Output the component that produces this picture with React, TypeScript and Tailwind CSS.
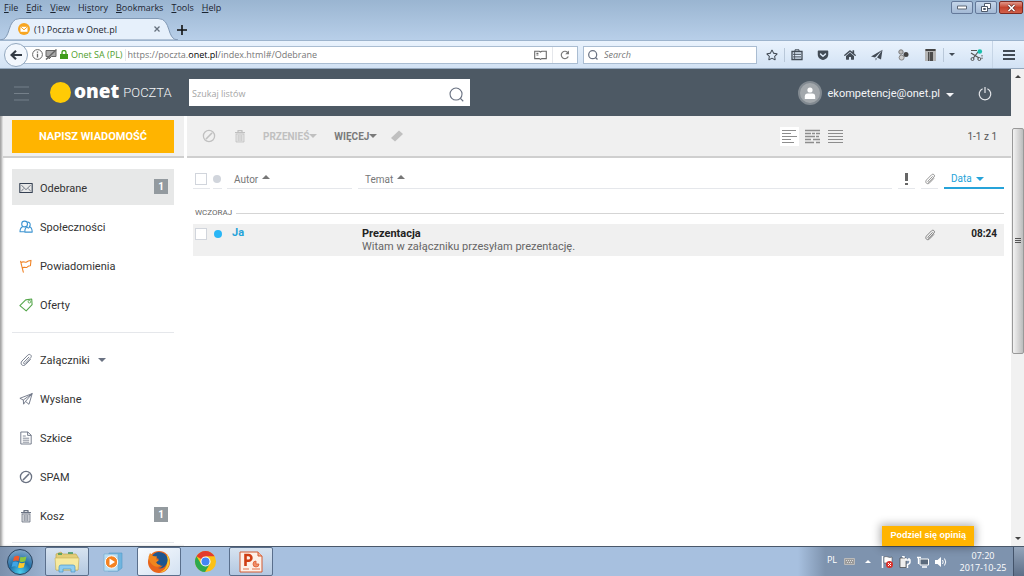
import type { ReactNode } from 'react'
import { FaRegStar, FaGetPocket, FaHome } from 'react-icons/fa'

/* ---------- Icons ---------- */

function Caret({ className = '', up = false }: { className?: string; up?: boolean }) {
    return (
        <svg viewBox="0 0 8 4" className={`w-2 h-1 shrink-0 ${className}`} fill="currentColor" aria-hidden="true">
            <path d={up ? 'M4 0L8 4H0z' : 'M0 0H8L4 4z'} />
        </svg>
    )
}

function LineIcon({ className = '', children }: { className?: string; children: ReactNode }) {
    return (
        <svg
            viewBox="0 0 14 14"
            className={`w-3.5 h-3.5 shrink-0 ${className}`}
            fill="none"
            stroke="currentColor"
            strokeWidth="1.1"
            strokeLinejoin="round"
            aria-hidden="true"
        >
            {children}
        </svg>
    )
}

const BanIcon = ({ className = '' }) => (
    <LineIcon className={className}>
        <circle cx="7" cy="7" r="5.6" strokeWidth="1.3" />
        <path d="M4.3 9.7L9.7 4.3" strokeWidth="1.6" strokeLinecap="round" />
    </LineIcon>
)

const TrashIcon = ({ className = '' }) => (
    <LineIcon className={className}>
        <path d="M2 3.6h10M5 3.4V1.6h4v1.8" strokeWidth="1.3" />
        <path d="M3 5h8v8H3z" fill="currentColor" fillOpacity="0.25" strokeWidth="0.8" />
        <path d="M5.3 6v6M7 6v6M8.7 6v6" strokeWidth="0.7" />
    </LineIcon>
)

const ClipIcon = ({ className = '' }) => (
    <LineIcon className={className}>
        <path
            d="M9.8 4.2L4.8 9.4c-.8.9.5 2.1 1.3 1.2l5.6-5.900c1.8-2-1-4.500-2.900-2.600L3 8C.4 10.900 3.900 14.200 6.600 11.500l4.800-5"
            strokeWidth="0.9"
            strokeLinecap="round"
        />
    </LineIcon>
)

const MailIcon = () => (
    <LineIcon className="text-gray-700">
        <path d="M.8 2.5h12.4v9H.8z" />
        <path d="M2.5 4.2L7 8.7l4.5-4.5M2.3 10l2.4-2.2M11.7 10L9.3 7.8" strokeWidth="0.7" />
    </LineIcon>
)

const PeopleIcon = () => (
    <LineIcon className="text-[#3d94d1]">
        <circle cx="5.6" cy="4" r="2.9" />
        <path d="M4 6.6C1.8 7.4 1 9 1 11.8h4.6" />
        <path d="M8.3 2.2c2.5-.6 4 2.6 2.1 4.3 2 .8 2.8 2.6 2.8 5.6H5.8c0-3 .8-4.7 2.6-5.5M7.3 6.3l2 1.8 1.7-1.2" />
    </LineIcon>
)

const FlagIcon = () => (
    <LineIcon className="text-[#f08427]">
        <path d="M4.3 13.2L1.6 2.4M2 3.6c2.6-2 4 .6 5.6-.6 1.5-1.3 2.8-1.4 4.4-1.6l-.6 5.400c-1.800 0-2 .2-3.400 1.400-1.600 1-3-.8-4.800.8" strokeLinecap="round" />
    </LineIcon>
)

const TagIcon = () => (
    <LineIcon className="text-[#55a64b]">
        <path d="M.9 7.6L6.7 1.9l6-.9.4 5.6-5.9 6.3z" />
        <circle cx="10.4" cy="3.7" r="1.3" strokeWidth="0.9" />
    </LineIcon>
)

const SendIcon = () => (
    <LineIcon className="text-gray-500">
        <path d="M.9 6.3L13.2 1.6 10 12.3 6.5 9.4 4.6 12.2 4.3 8zM4.3 8L13.2 1.6 6.5 9.4" strokeWidth="0.9" />
    </LineIcon>
)

const DraftIcon = () => (
    <LineIcon className="text-gray-500">
        <path d="M1.8 1h7l3.4 3.2V13H1.8zM8.6 1v3.4h3.6" strokeWidth="0.9" />
        <path d="M3.8 5h3M3.8 7.2h6.4M3.8 9.2h6.4M3.8 11.2h6.4" strokeWidth="0.8" />
    </LineIcon>
)

const Magnifier = ({ className = '' }) => (
    <svg viewBox="0 0 16 16" className={className} fill="none" stroke="currentColor" strokeWidth="1.2" aria-hidden="true">
        <circle cx="7.5" cy="7.5" r="6.4" />
        <path d="M12 12l3.2 3.2" />
    </svg>
)

/* ---------- Browser chrome ---------- */

const menus = ['File', 'Edit', 'View', 'History', 'Bookmarks', 'Tools', 'Help']
const accessKeys = [0, 0, 0, 2, 0, 0, 0]

function TitleBar() {
    return (
        <header className="bg-linear-to-b from-[#9ab5d1] to-[#b8cfe9] border-b border-[#9db4cd] text-[#1b2430]">
            <div className="flex h-4 items-start">
                <nav className="flex h-4 items-center gap-2 pl-1 text-[9px] leading-4">
                    {menus.map((menu, i) => (
                        <button key={menu} className="whitespace-nowrap">
                            {menu.slice(0, accessKeys[i])}
                            <u>{menu[accessKeys[i]]}</u>
                            {menu.slice(accessKeys[i] + 1)}
                        </button>
                    ))}
                </nav>
                <div className="ml-auto flex gap-0.5 pr-px pt-px">
                    <button aria-label="Minimize" className="flex h-[13px] w-[22px] items-center justify-center rounded-xs border border-[#64799a] bg-linear-to-b from-[#c5d6ea] to-[#a3b9d5]">
                        <svg viewBox="0 0 10 5" className="h-[5px] w-2.5"><path d="M.5 1h9v3h-9z" fill="#fff" stroke="#5c6675" /></svg>
                    </button>
                    <button aria-label="Restore" className="flex h-[13px] w-[22px] items-center justify-center rounded-xs border border-[#64799a] bg-linear-to-b from-[#c5d6ea] to-[#a3b9d5]">
                        <svg viewBox="0 0 10 9" className="h-[9px] w-2.5" fill="#fff" stroke="#4f5a6b"><path d="M3.5.5h6v5h-6z" /><path d="M.5 3.5h6v5h-6z" /><path d="M2.5 5.5h2v1h-2z" /></svg>
                    </button>
                    <button aria-label="Close" className="flex h-[13px] w-6 items-center justify-center rounded-xs border border-[#7d2b22] bg-linear-to-b from-[#e0978a] via-[#c4432d] to-[#d2604a]">
                        <svg viewBox="0 0 9 8" className="h-2 w-[9px]"><path d="M1.5 1l6 6M7.5 1l-6 6" stroke="#5f2a25" strokeWidth="3" /><path d="M1.5 1l6 6M7.5 1l-6 6" stroke="#fff" strokeWidth="1.7" /></svg>
                    </button>
                </div>
            </div>
            <div className="flex h-6 items-end">
                <div className="relative h-[22px] w-[178px]">
                    <svg viewBox="0 0 178 22" className="absolute inset-0 h-full w-full" preserveAspectRatio="none" aria-hidden="true">
                        <path d="M0 22C12 22 6 .5 20 .5H158C172 .5 166 22 178 22z" fill="#e6f0fb" stroke="#8199b5" />
                    </svg>
                    <div className="relative flex h-full items-center pl-[18px] pr-[18px]">
                        <svg viewBox="0 0 12 12" className="h-3 w-3" aria-hidden="true">
                            <circle cx="6" cy="6" r="6" fill="#f7a521" />
                            <path d="M2.5 3.8h7v5h-7z" fill="#fff" />
                            <path d="M2.5 3.8L6 6.8l3.5-3" fill="none" stroke="#f7a521" />
                        </svg>
                        <span className="ml-1 pt-px text-[9px]">(1) Poczta w Onet.pl</span>
                        <button aria-label="Close tab" className="ml-auto">
                            <svg viewBox="0 0 6 6" className="h-1.5 w-1.5"><path d="M.5.5l5 5M5.5.5l-5 5" stroke="#66717e" strokeWidth="1.3" /></svg>
                        </button>
                    </div>
                </div>
                <button aria-label="New tab" className="mb-[5px] -ml-px">
                    <svg viewBox="0 0 10 10" className="h-2.5 w-2.5"><path d="M5 0v10M0 5h10" stroke="#111" strokeWidth="1.6" /></svg>
                </button>
            </div>
        </header>
    )
}

function AddressBar() {
    return (
        <div className="flex h-7 items-center border-b border-[#93a7bd] bg-linear-to-b from-[#eaf3fd] to-[#d2e2f4] text-[9px] text-[#424b55]">
            <button aria-label="Back" className="relative z-10 ml-1 flex h-6 w-6 shrink-0 items-center justify-center rounded-full border border-[#93a8bf] bg-[#f2f7fd]">
                <svg viewBox="0 0 12 10" className="h-2.5 w-3"><path d="M12 5H2M6 .8L1.6 5 6 9.2" fill="none" stroke="#333b45" strokeWidth="2.2" /></svg>
            </button>
            <div className="-ml-1.5 flex h-[18px] min-w-0 flex-1 items-center border border-[#aabdd2] bg-white pl-[9px]">
                <svg viewBox="0 0 11 11" className="h-[11px] w-[11px] shrink-0" fill="none" stroke="#666"><circle cx="5.5" cy="5.5" r="4.9" /><path d="M5.5 4.8V8.4M5.5 2.6v1.2" strokeWidth="1.3" /></svg>
                <svg viewBox="0 0 12 11" className="ml-0.5 h-[11px] w-3 shrink-0" fill="none" stroke="#666"><path d="M1 1.5h10v6H6.5L4 10V7.5H1z" fill="#aaa" /><path d="M1 10.5L11.5.5" strokeWidth="1.5" /></svg>
                <svg viewBox="0 0 8 9" className="ml-[3px] h-[9px] w-2 shrink-0"><path d="M0 4h8v5H0z" fill="#3f9c1b" /><path d="M2 4.5V2.5a2 2 0 014 0v2" fill="none" stroke="#3f9c1b" strokeWidth="1.3" /></svg>
                <span className="ml-[3px] shrink-0 text-[#4f9e2d]">Onet SA (PL)</span>
                <span className="mx-0.5 h-3 w-px shrink-0 bg-gray-200" />
                <span className="truncate text-[#777]">
                    https://poczta.<span className="text-black">onet.pl</span>/index.html#/Odebrane
                </span>
                <button aria-label="Reader view" className="ml-auto pr-[5px]">
                    <svg viewBox="0 0 13 10" className="h-2.5 w-[13px]" fill="none" stroke="#6a6a6a" strokeWidth="1.1"><path d="M.7 1.2h4.6l1.2.8 1.2-.8h4.6v7.4H7.7l-1.2.8-1.2-.8H.7zM2.4 3.4h2M2.4 5h2" /></svg>
                </button>
                <button aria-label="Reload" className="flex h-4 items-center border-l border-gray-200 px-[7px]">
                    <svg viewBox="0 0 10 10" className="h-2.5 w-2.5" fill="none" stroke="#7a7a7a" strokeWidth="1.2"><path d="M8.3 6.6A3.7 3.7 0 118 2.8" /><path d="M9 .4v3.9H5.2z" fill="#7a7a7a" stroke="none" /></svg>
                </button>
            </div>
            <label className="ml-[5px] flex h-[18px] w-[17%] items-center border border-[#aabdd2] bg-white pl-1">
                <Magnifier className="h-2.5 w-2.5 shrink-0 text-gray-500 stroke-2" />
                <input aria-label="Search" placeholder="Search" className="ml-1.5 w-full min-w-0 italic outline-none placeholder:text-[#777]" />
            </label>
            <div className="flex h-full shrink-0 items-center pl-[3px]">
                <button aria-label="Bookmark" className="flex w-6 justify-center"><FaRegStar className="h-3 w-3" /></button>
                <span className="h-3.5 w-px bg-[#b9c8d9]" />
                <button aria-label="Bookmarks list" className="flex w-6 justify-center">
                    <svg viewBox="0 0 12 12" className="h-3 w-3" fill="none" stroke="currentColor"><path d="M1 2.5h10v8H1z" strokeWidth="1.3" /><path d="M4 2V.8h4V2M2 5.3h8M2 7.900h8" /><path d="M3.600 3v7" strokeWidth="0.8" /></svg>
                </button>
                <button aria-label="Pocket" className="flex w-[27px] justify-center"><FaGetPocket className="h-3 w-3" /></button>
                <button aria-label="Home" className="flex w-[27px] justify-center"><FaHome className="h-3 w-3" /></button>
                <button aria-label="Share" className="flex w-[27px] justify-center">
                    <svg viewBox="0 0 12 12" className="h-3 w-3" fill="currentColor"><path d="M0 7.500L11.500.8 4 8.500zM11.500.8L10 10.500 6 8.600zM4.600 9L6 9.800 4.600 11.500z" /></svg>
                </button>
                <button aria-label="Add-on" className="flex w-[27px] justify-center">
                    <svg viewBox="0 0 11 12" className="h-3 w-[11px]"><circle cx="3" cy="3" r="2.2" fill="#bbb" stroke="#777" /><circle cx="3.6" cy="8.6" r="2.5" fill="#ccc" stroke="#888" /><circle cx="8" cy="5.5" r="2.5" fill="#444" /></svg>
                </button>
                <button aria-label="Container" className="flex w-[26px] justify-center">
                    <svg viewBox="0 0 11 13" className="h-[13px] w-[11px]"><path d="M0 1h11v12H0z" fill="#b5b5b5" /><path d="M.5 1h10v2H.5z" fill="#444" /><path d="M3 4h5v9H3z" fill="#4b4b4b" /><path d="M4.5 4v9" stroke="#888" /></svg>
                </button>
                <span className="h-3.5 w-px bg-[#b9c8d9]" />
                <button aria-label="More" className="flex w-4 justify-center"><Caret className="w-1.5! h-[3px]!" /></button>
                <button aria-label="Screenshot" className="flex w-8 justify-center">
                    <svg viewBox="0 0 13 12" className="h-3 w-[13px]" fill="none" stroke="#555"><path d="M1 1.5h6M1 4l8 5M3 9.5L8 3" strokeWidth="1.2" /><circle cx="2.5" cy="10" r="1.5" /><circle cx="9.3" cy="10" r="1.5" /><path d="M12 6v5" strokeDasharray="1.5 1" /><circle cx="9.8" cy="2.5" r="2.3" fill="#18bfae" stroke="none" /></svg>
                </button>
                <button aria-label="Open menu" className="flex h-full w-8 items-center justify-center border-l border-[#c6d5e6]">
                    <svg viewBox="0 0 12 10" className="h-2.5 w-3" stroke="currentColor" strokeWidth="2"><path d="M0 1h12M0 5h12M0 9h12" /></svg>
                </button>
            </div>
        </div>
    )
}

/* ---------- Mail application ---------- */

function MailHeader() {
    return (
        <header className="flex h-[47px] shrink-0 items-center bg-[#4d5964] text-white">
            <button aria-label="Menu" className="ml-3.5 pt-0.5">
                <svg viewBox="0 0 15 15" className="h-[15px] w-[15px]" stroke="#75808a" strokeWidth="1.2"><path d="M0 1h15M0 7.5h15M0 14h15" /></svg>
            </button>
            <a href="#" className="ml-[21px] flex w-[139px] items-center">
                <span className="h-[21px] w-[21px] rounded-full bg-[#ffcb05]" />
                <span className="ml-[3px] pb-1 font-['Open_Sans'] text-[19px] leading-5 font-extrabold">onet</span>
                <span className="ml-1 text-[13px] leading-5 font-light text-gray-100">POCZTA</span>
            </a>
            <form className="flex h-[27px] w-[281px] items-center bg-white pl-[3px] pr-1.5 text-gray-500">
                <input aria-label="Szukaj listów" placeholder="Szukaj listów" className="min-w-0 flex-1 pt-0.5 font-['Open_Sans'] text-[9px] outline-none placeholder:text-[#a5a5a5]" />
                <button aria-label="Szukaj" type="button" className="pt-1"><Magnifier className="h-[15px] w-[15px]" /></button>
            </form>
            <button className="ml-auto flex items-center text-[11px] text-gray-100">
                <span className="mr-1.5 flex h-6 w-6 items-center justify-center rounded-full border-2 border-[#828a91] bg-[#a3a8ac]">
                    <svg viewBox="0 0 12 12" className="h-3 w-3" fill="#fff"><circle cx="6" cy="3" r="2.6" /><path d="M.8 12V9.6Q.8 6.6 3.6 6.6h4.8q2.8 0 2.8 3V12z" /></svg>
                </span>
                <span className="pt-1">ekompetencje@onet.pl</span>
                <Caret className="mt-1 ml-1.5" />
            </button>
            <button aria-label="Wyloguj" className="mr-[19px] ml-6 pt-0.5">
                <svg viewBox="0 0 14 14" className="h-3.5 w-3.5" fill="none" stroke="#e5e7eb" strokeWidth="1.2"><path d="M4.6 1.8a5.8 5.8 0 104.8 0M7 0v6" /></svg>
            </button>
        </header>
    )
}

type Folder = { label: string; icon: ReactNode; count?: number; active?: boolean; expandable?: boolean }

const mainFolders: Folder[] = [
    { label: 'Odebrane', icon: <MailIcon />, count: 1, active: true },
    { label: 'Społeczności', icon: <PeopleIcon /> },
    { label: 'Powiadomienia', icon: <FlagIcon /> },
    { label: 'Oferty', icon: <TagIcon /> },
]

const otherFolders: Folder[] = [
    { label: 'Załączniki', icon: <ClipIcon className="text-gray-500" />, expandable: true },
    { label: 'Wysłane', icon: <SendIcon /> },
    { label: 'Szkice', icon: <DraftIcon /> },
    { label: 'SPAM', icon: <BanIcon className="text-gray-500" /> },
    { label: 'Kosz', icon: <TrashIcon className="text-gray-500" />, count: 1 },
]

function FolderList({ folders }: { folders: Folder[] }) {
    return (
        <ul className="flex flex-col gap-[3px]">
            {folders.map((folder) => (
                <li key={folder.label}>
                    <a href="#" className={`flex h-9 items-center pt-0.5 pl-[7px] pr-1.5 text-[11px] text-[#333] ${folder.active ? 'bg-[#e7e8e8]' : ''}`}>
                        {folder.icon}
                        <span className="ml-[7px] pt-0.5">{folder.label}</span>
                        {folder.expandable && <Caret className="ml-2 text-gray-500" />}
                        {folder.count && (
                            <span className="ml-auto mb-1 flex h-[15px] w-3.5 items-center justify-center bg-[#939a9f] text-[10px] font-bold text-white">
                                {folder.count}
                            </span>
                        )}
                    </a>
                </li>
            ))}
        </ul>
    )
}

function Sidebar() {
    return (
        <aside className="flex w-[184px] shrink-0 flex-col pl-[3px] shadow-[inset_3px_0_3px_-1px_#999]">
            <div className="flex h-[42px] items-center border-b-2 border-[#cfcfcf] bg-[#f0f0f0] pl-[9px] pr-2.5">
                <button className="h-[33px] w-full bg-[#ffb400] pt-0.5 text-[11px] font-bold text-white">NAPISZ WIADOMOŚĆ</button>
            </div>
            <nav className="mt-[11px] ml-[9px] mr-2.5">
                <FolderList folders={mainFolders} />
                <hr className="mt-2.5 mb-2 border-gray-200" />
                <FolderList folders={otherFolders} />
                <hr className="mt-[9px] border-gray-200" />
            </nav>
        </aside>
    )
}

function Toolbar() {
    return (
        <div className="flex h-[42px] shrink-0 items-center border-b-2 border-[#cfcfcf] bg-[#f0f0f0] pl-[15px] pr-3.5 text-[10px] font-bold text-[#c0c0c0]">
            <button aria-label="Spam"><BanIcon /></button>
            <button aria-label="Usuń" className="ml-[17px]"><TrashIcon /></button>
            <button className="ml-4 flex items-center">PRZENIEŚ<Caret /></button>
            <button className="ml-[17px] flex items-center text-[#7a7a7a]">WIĘCEJ<Caret /></button>
            <button aria-label="Wyczyść" className="ml-3.5">
                <svg viewBox="0 0 12 12" className="h-3 w-3" fill="currentColor"><path d="M0 8l8-7.5L12 4l-8 7.5z" /></svg>
            </button>
            <div className="ml-auto flex items-center gap-1 text-[#8d8d8d]">
                <button aria-label="Widok listy" className="bg-white p-0.5">
                    <svg viewBox="0 0 15 15" className="h-[15px] w-[15px]" stroke="currentColor"><path d="M0 1.5h14M0 4.5h9M0 7.5h15M0 10.5h9M0 13.5h12" /></svg>
                </button>
                <button aria-label="Widok z podglądem" className="p-0.5">
                    <svg viewBox="0 0 15 15" className="h-[15px] w-[15px]" stroke="currentColor"><path d="M0 1.5h15M0 4.5h6M7 4.5h3M11 4.5h4M0 7.5h10M11 7.5h3M0 10.5h6M8 10.5h7M0 13.5h9M11 13.5h4" strokeWidth="1.3" /></svg>
                </button>
                <button aria-label="Widok zwarty" className="p-0.5">
                    <svg viewBox="0 0 15 15" className="h-[15px] w-[15px]" stroke="currentColor" strokeWidth="1.2"><path d="M0 1.5h15M0 4.5h15M0 7.5h15M0 10.5h15M0 13.5h15" /></svg>
                </button>
            </div>
            <span className="ml-[122px] font-normal text-[#555]">1-1 z 1</span>
        </div>
    )
}

function Box({ label }: { label: string }) {
    return <input type="checkbox" aria-label={label} className="block h-3 w-3 appearance-none border border-gray-300 bg-white" />
}

function MessageTable() {
    const head = 'flex h-[19px] items-center border-b border-gray-200'
    return (
        <table className="mt-3 w-full table-fixed text-left text-[11px] text-[#666]">
            <colgroup>
                <col className="w-[19px]" />
                <col className="w-3" />
                <col className="w-[131px]" />
                <col />
                <col className="w-[23px]" />
                <col className="w-[23px]" />
                <col className="w-[63px]" />
            </colgroup>
            <thead className="text-[10px] text-[#777]">
                <tr>
                    <th className="pr-0.5 font-normal"><div className={`${head} pl-0.5`}><Box label="Zaznacz wszystkie" /></div></th>
                    <th className="pl-px pr-0.5 font-normal"><div className={head}><span className="h-2 w-2 rounded-full bg-gray-300" /></div></th>
                    <th className="px-[3px] font-normal"><div className={`${head} gap-1 pl-[7px]`}>Autor <Caret up className="mb-1" /></div></th>
                    <th className="px-[3px] font-normal"><div className={`${head} gap-1 pl-[7px]`}>Temat <Caret up className="mb-1" /></div></th>
                    <th className="px-[3px] font-normal">
                        <div className={`${head} justify-center`}>
                            <svg viewBox="0 0 3 12" className="h-3 w-[3px]" fill="#666"><path d="M0 0h3v8H0zM0 10h3v2H0z" /></svg>
                        </div>
                    </th>
                    <th className="px-[3px] font-normal"><div className={`${head} justify-center`}><ClipIcon className="h-3! w-3!" /></div></th>
                    <th className="pl-[3px] font-normal text-[#26a3d9]"><div className="flex h-[19px] items-center gap-1 border-b-2 border-[#26a3d9] pl-[7px]">Data <Caret /></div></th>
                </tr>
            </thead>
            <tbody>
                <tr>
                    <td colSpan={7} className="pt-[18px] pb-[5px]">
                        <div className="flex h-3 items-center gap-1 pl-0.5 text-[8px]">WCZORAJ<span className="h-px flex-1 bg-[#d5d5d5]" /></div>
                    </td>
                </tr>
                <tr className="h-8 bg-[#f0f0f0] align-top">
                    <td className="pl-0.5 pt-1"><Box label="Zaznacz wiadomość" /></td>
                    <td className="pl-0.5 pt-1.5"><span className="block h-2 w-2 rounded-full bg-[#29b6f6]" /></td>
                    <td className="pl-2 pt-0.5 font-bold leading-[13px] text-[#26a3d9]">Ja</td>
                    <td className="pl-[7px] pt-[3px] leading-[13px]">
                        <p className="font-bold text-[#222]">Prezentacja</p>
                        <p>Witam w załączniku przesyłam prezentację.</p>
                    </td>
                    <td />
                    <td className="pl-1.5 pt-[5px]"><ClipIcon className="h-3! w-3!" /></td>
                    <td className="pr-[7px] pt-[3px] text-right text-[10px] leading-[13px] font-bold text-[#222]">08:24</td>
                </tr>
            </tbody>
        </table>
    )
}

function ScrollBar() {
    return (
        <div className="flex w-[13px] shrink-0 flex-col items-center bg-[#f1f1f1] py-1.5 text-[#444]">
            <Caret up className="w-1.5! h-[3px]!" />
            <div className="flex-[50]" />
            <div className="flex w-3 flex-[225] items-center justify-center rounded-xs border border-[#999] bg-linear-to-r from-[#f3f3f3] to-[#bdbdbd]">
                <svg viewBox="0 0 6 6" className="h-1.5 w-1.5" stroke="#555"><path d="M0 .5h6M0 2.5h6M0 4.5h6" /></svg>
            </div>
            <div className="flex-[184]" />
            <Caret className="w-1.5! h-[3px]!" />
        </div>
    )
}

/* ---------- Taskbar ---------- */

function Task({ label, open = false, bright = false, children }: { label: string; open?: boolean; bright?: boolean; children: ReactNode }) {
    const look = bright
        ? 'border-[#5a6f8c] bg-linear-to-br from-[#f8fbff] to-[#d3e1f1]'
        : open
          ? 'border-[#5a6f8c] bg-linear-to-b from-[#d7e3f0] to-[#b3c8e1]'
          : 'border-transparent'
    return (
        <button aria-label={label} className={`flex h-[29px] w-11 items-center justify-center rounded-xs border ${look}`}>
            {children}
        </button>
    )
}

function Taskbar() {
    return (
        <footer className="flex h-[30px] shrink-0 items-center border-t border-[#4a586a] bg-linear-to-r from-[#7b90ac] via-[#a7c0df] via-6% to-[#a7c0df] text-white">
            <button aria-label="Start" className="mr-3 ml-[7px]">
                <svg viewBox="0 0 26 26" className="h-[26px] w-[26px]">
                    <defs>
                        <radialGradient id="orb" cx="50%" cy="90%" r="85%">
                            <stop offset="0" stopColor="#4bd0ee" />
                            <stop offset="0.5" stopColor="#1d6fa8" />
                            <stop offset="1" stopColor="#7ba2c4" />
                        </radialGradient>
                    </defs>
                    <circle cx="13" cy="13" r="12.5" fill="url(#orb)" stroke="#29435f" />
                    <path d="M7 8q3-2 5.5-.6L11.5 12Q9 10.800 6 12.300z" fill="#f0592a" />
                    <path d="M13.500 7.800Q16 9 19.500 7.600L18.300 12.300Q15.500 13.600 12.500 12.400z" fill="#8cc63e" />
                    <path d="M5.700 13.300Q8.500 11.900 11.200 13.200L10 18Q7.500 16.700 4.600 18z" fill="#3fa4e4" />
                    <path d="M12.200 13.600Q15 14.900 18 13.500L16.800 18.200Q14 19.600 11 18.400z" fill="#fdc82e" />
                </svg>
            </button>
            <div className="flex gap-0.5">
                <Task label="Explorer" open>
                    <svg viewBox="0 0 26 22" className="h-[22px] w-[26px]">
                        <path d="M2 3l5-2 2 2h13l2 3v13H2z" fill="#e3ce78" stroke="#b99f48" strokeWidth="0.6" />
                        <path d="M4 3h4M14 2h5" stroke="#3e9455" strokeWidth="1.5" />
                        <path d="M1 7h24l-1 12H2z" fill="#f7eaa0" stroke="#c8b25c" strokeWidth="0.6" />
                        <path d="M5 21v-5q0-2 2-2h12q2 0 2 2v5h-4v-3H9v3z" fill="#8ecdf0" stroke="#4b95c5" strokeWidth="0.7" />
                    </svg>
                </Task>
                <Task label="Media Player">
                    <svg viewBox="0 0 20 20" className="h-5 w-5">
                        <path d="M6 1h13v15l-4 3H5z" fill="#70b5df" stroke="#5499c8" strokeWidth="0.6" />
                        <path d="M1 2h14v17H1z" fill="#b9def3" stroke="#6fa9cd" strokeWidth="0.6" />
                        <circle cx="8.500" cy="10" r="6.200" fill="#f58220" stroke="#fff" />
                        <path d="M6.500 6.500L12 10l-5.500 3.500z" fill="#fff" />
                    </svg>
                </Task>
                <Task label="Firefox" bright>
                    <svg viewBox="0 0 24 24" className="h-6 w-6">
                        <circle cx="12" cy="12" r="11" fill="#e8641b" />
                        <path d="M20 4q5 8 .5 14-3 4-8 4.500 7-3 7.500-9z" fill="#fcc52c" />
                        <path d="M5 6Q10-1 18 4q4 4 2 9-3 7-9 5 3 0 5-2.500-5 1-7-3 2-3 3-3.500L9 8z" fill="#1e558f" />
                        <path d="M1.500 7L3 3l3 3 4 .5-1 3 3 1-3 1.500q1 3 5 3-3 3-7 1-5-3-5.500-9z" fill="#f0861e" />
                    </svg>
                </Task>
                <Task label="Chrome">
                    <svg viewBox="0 0 24 24" className="h-[23px] w-[23px]">
                        <circle cx="12" cy="12" r="11" fill="#fbc116" />
                        <path d="M12 12L2.500 6.500A11 11 0 0121.500 6.500H12z" fill="#e23b2e" />
                        <path d="M2.500 6.500A11 11 0 0011.500 23L16.500 14.500 12 12 7.500 14.500z" fill="#2da94f" />
                        <circle cx="12" cy="12" r="5.300" fill="#fff" />
                        <circle cx="12" cy="12" r="4.200" fill="#4285f4" />
                    </svg>
                </Task>
                <Task label="PowerPoint" open>
                    <svg viewBox="0 0 24 22" className="h-[22px] w-6">
                        <path d="M1 1h18l4 4v16H1z" fill="#fdf0e8" stroke="#d35a30" />
                        <path d="M19 1v4h4" fill="#f3b49a" stroke="#d35a30" />
                        <path d="M6.500 15V4h3a2.900 2.900 0 010 5.800h-3" fill="none" stroke="#cf3d12" strokeWidth="2.600" />
                        <path d="M17 10v3h3a3 3 0 11-3-3z" fill="#f0906a" stroke="#dd5b30" strokeWidth="0.8" />
                        <path d="M13 18h8M4 18h6" stroke="#e4734a" />
                    </svg>
                </Task>
            </div>
            <div className="ml-auto flex h-full items-center bg-linear-to-r from-transparent to-[#7e93ae] to-12% pl-[29px] font-['Open_Sans'] text-[9px]">
                <span className="pb-1">PL</span>
                <svg viewBox="0 0 11 7" className="ml-[7px] h-[7px] w-[11px]"><path d="M.5.5h10v6H.5z" fill="#9a9a9a" stroke="#bbb" /><path d="M2 2.500h7M3 4.500h5" stroke="#ddd" strokeDasharray="1 1" /></svg>
                <Caret up className="mx-2.5 w-1.5! h-[3px]!" />
                <div className="flex gap-1.5">
                    <svg viewBox="0 0 12 12" className="h-3 w-3"><path d="M1.500 0v12" stroke="#fff" strokeWidth="1.500" /><path d="M3 1q2-1 4 0t4 0v6H3z" fill="#fff" stroke="#444" strokeWidth="0.5" /><circle cx="8.500" cy="8.500" r="3.500" fill="#d9302a" /><path d="M7 7l3 3M10 7l-3 3" stroke="#fff" /></svg>
                    <svg viewBox="0 0 12 12" className="h-3 w-3"><path d="M1 2h6v9.500H1z" fill="#eee" stroke="#444" strokeWidth="0.7" /><path d="M3 .5h2V2M6 4h5v2q0 2-2.500 2.500V12M7 2v2M10 2v2" fill="none" stroke="#fff" strokeWidth="1.400" /></svg>
                    <svg viewBox="0 0 12 12" className="h-3 w-3"><path d="M3 3h8.500v6H3z" fill="#5b6a7c" stroke="#fff" /><path d="M5 11h5M1.500 1v7M0 1.500h4" stroke="#fff" strokeWidth="1.300" /></svg>
                    <svg viewBox="0 0 12 12" className="h-3 w-3"><path d="M0 4h2.500L6 1v10L2.500 8H0z" fill="#fff" /><path d="M7.500 4q1.500 2 0 4M9.500 2.500q2.500 3.500 0 7" fill="none" stroke="#fff" /></svg>
                </div>
                <time className="ml-3 w-[48px] text-center leading-3 whitespace-nowrap">
                    07:20<br />2017-10-25
                </time>
                <button aria-label="Show desktop" className="ml-1.5 h-full w-[11px] border-l border-[#43536a] bg-linear-to-b from-[#94a5bb] to-[#5d6f88]" />
            </div>
        </footer>
    )
}

export default function App() {
    return (
        <div className="flex h-screen flex-col overflow-hidden bg-white font-['Roboto',sans-serif]">
            <div className="shrink-0 font-['Open_Sans',sans-serif]">
                <TitleBar />
                <AddressBar />
            </div>

            <div className="flex min-h-0 flex-1">
                <div className="relative flex min-w-0 flex-1 flex-col">
                    <MailHeader />
                    <div className="flex min-h-0 flex-1">
                        <Sidebar />
                        <main className="ml-[3px] flex min-w-0 flex-1 flex-col">
                            <Toolbar />
                            <div className="pl-1.5 pr-[7px]">
                                <MessageTable />
                            </div>
                        </main>
                    </div>
                    <button className="absolute right-[37px] bottom-0 h-5 bg-[#ffb400] px-2 font-['Liberation_Sans'] text-[9px] font-bold text-white shadow-[0_0_8px_2px_rgba(0,0,0,0.3)]">
                        Podziel się opinią
                    </button>
                </div>
                <ScrollBar />
            </div>

            <Taskbar />
        </div>
    )
}
